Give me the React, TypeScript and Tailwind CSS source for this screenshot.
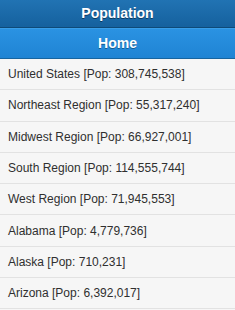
import React from "react";

const rows = [
  "United States [Pop: 308,745,538]",
  "Northeast Region [Pop: 55,317,240]",
  "Midwest Region [Pop: 66,927,001]",
  "South Region [Pop: 114,555,744]",
  "West Region [Pop: 71,945,553]",
  "Alabama [Pop: 4,779,736]",
  "Alaska [Pop: 710,231]",
  "Arizona [Pop: 6,392,017]",
];

export default function App() {
  return (
    <div
      className="w-[235px] h-[310px] overflow-hidden bg-[#f6f6f6]"
      style={{ fontFamily: '"Liberation Sans", Arial, sans-serif' }}
    >
      {/* Title bar */}
      <header className="h-[28px] flex items-center justify-center bg-gradient-to-b from-[#2173b3] to-[#15619e] border-b border-[#0e4a78]">
        <h1 className="text-[14px] font-bold text-white [text-shadow:0_1px_0_#0c3a5f]">
          Population
        </h1>
      </header>

      {/* Nav bar */}
      <div className="h-[31px] flex items-center justify-center bg-gradient-to-b from-[#2a92e2] to-[#1f84d4] border-t border-[#3a9ee8] border-b border-b-[#17649f]">
        <span className="text-[14px] font-bold text-white [text-shadow:0_1px_0_#145a90]">
          Home
        </span>
      </div>

      {/* List */}
      <ul>
        {rows.map((r) => (
          <li
            key={r}
            className="h-[31.3px] flex items-center px-[8px] border-b border-[#e2e2e2] bg-[#f6f6f6] text-[12px] text-[#2f2f2f]"
          >
            {r}
          </li>
        ))}
      </ul>
    </div>
  );
}
